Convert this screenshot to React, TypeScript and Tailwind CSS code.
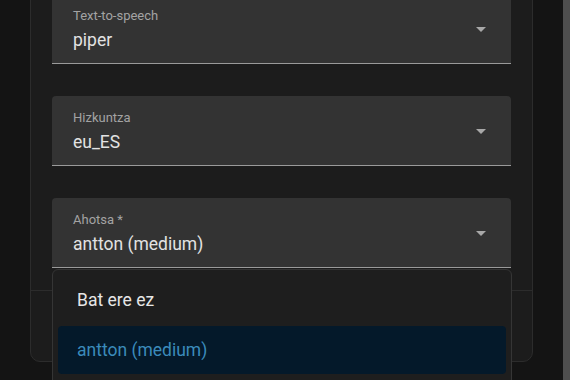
import { ReactNode } from "react"

function Arrow() {
  return (
    <svg viewBox="0 0 10 5" className="absolute right-[25px] top-[33px] h-[5px] w-[10px]" fill="#a8a8a8">
      <path d="M0 0h10L5 5z" />
    </svg>
  )
}

function SelectField({ label, value }: { label: string; value: ReactNode }) {
  return (
    <div className="relative h-[70px] rounded-t-[4px] border-b border-[#9a9a9a] bg-[#333333] pl-[21px]">
      <div className="pt-[14px] text-[13px] leading-[16px] text-[#a3a3a3]">{label}</div>
      <div className="mt-[4px] text-[17.5px] leading-[24px] text-[#e2e2e2]">{value}</div>
      <Arrow />
    </div>
  )
}

export default function App() {
  return (
    <div className="relative flex h-[380px] w-[570px] overflow-hidden bg-[#141414] font-['Roboto','Liberation_Sans',sans-serif]">
      {/* dialog */}
      <div className="ml-[30px] -mt-[30px] flex h-[392px] w-[503px] flex-col self-start rounded-b-[10px] border border-[#2c2c2c] bg-[#1c1c1c] px-[21px]">
        <div className="flex flex-col gap-[32px] pt-[23px]">
          <SelectField label="Text-to-speech" value="piper" />
          <SelectField label="Hizkuntza" value="eu_ES" />
          <SelectField label="Ahotsa *" value="antton (medium)" />
        </div>
        <div className="-mx-[21px] mt-[22px] flex-1 border-t border-[#2c2c2c]" />
      </div>

      {/* scrollbar */}
      <div className="ml-auto w-[7px] bg-[#4e4e4e]" />

      {/* dropdown menu */}
      <div className="absolute left-[52px] top-[269px] h-[120px] w-[460px] rounded-t-[6px] border border-[#353535] bg-[#1e1e1e] px-[5px] pt-[6px]">
        <div className="flex h-[48px] items-center px-[19px] text-[17.5px] text-[#e6e6e6]">Bat ere ez</div>
        <div className="mt-[2px] flex h-[48px] items-center rounded-[4px] bg-[#04192a] px-[19px] text-[17.5px] text-[#3b8bbb]">
          antton (medium)
        </div>
      </div>
    </div>
  )
}
